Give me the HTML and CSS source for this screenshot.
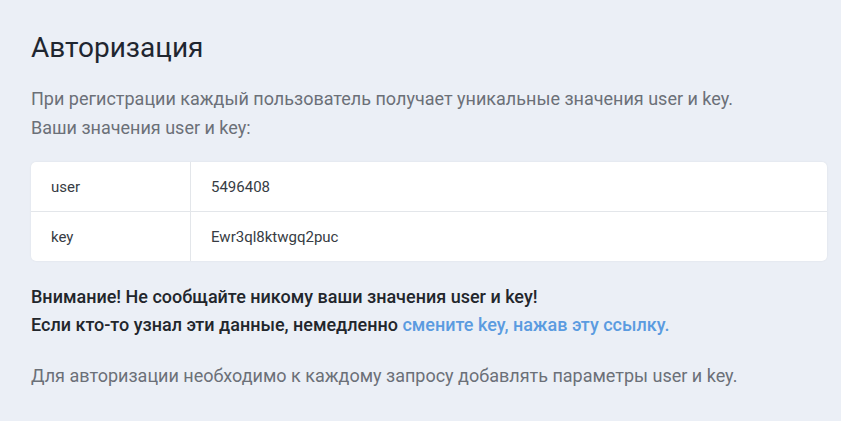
FILE: index.html
```html
<!DOCTYPE html>
<html lang="ru">
<head>
    <meta charset="UTF-8">
    <meta name="viewport" content="width=device-width, initial-scale=1.0">
    <title>Авторизация</title>
    <link rel="stylesheet" href="styles.css">
</head>
<body>
    <div class="page">
        <h1>Авторизация</h1>
        <p class="lead">При регистрации каждый пользователь получает уникальные значения user и key.<br>Ваши значения user и key:</p>

        <table class="creds">
            <tr>
                <td class="name">user</td>
                <td>5496408</td>
            </tr>
            <tr>
                <td class="name">key</td>
                <td>Ewr3ql8ktwgq2puc</td>
            </tr>
        </table>

        <p class="warn">Внимание! Не сообщайте никому ваши значения user и key!<br>Если кто-то узнал эти данные, немедленно <a href="#">смените key, нажав эту ссылку.</a></p>

        <p class="lead">Для авторизации необходимо к каждому запросу добавлять параметры user и key.</p>
    </div>
</body>
</html>
```

FILE: styles.css
```css
body {
    margin: 0;
    background-color: #ebeff6;
    font-family: Roboto, "Noto Sans", sans-serif;
    color: #212529;
}

.page {
    padding: 28px 14px 20px 31px;
}

h1 {
    font-size: 28px;
    font-weight: 400;
    margin: 0 0 16px;
    line-height: 40px;
    color: #1f2630;
}

.lead {
    font-size: 18px;
    line-height: 29px;
    color: #6b7078;
    margin: 0 0 20px;
}

.creds {
    width: 100%;
    border-collapse: collapse;
    background: #fff;
    border-radius: 5px;
    box-shadow: 0 0 2px rgba(0, 0, 0, 0.08);
    font-size: 15px;
    color: #373c44;
    margin-bottom: 22px;
}

.creds td {
    height: 49px;
    padding: 0 20px;
}

.creds tr + tr td {
    border-top: 1px solid #e3e6ea;
}

.creds .name {
    width: 119px;
    border-right: 1px solid #e3e6ea;
}

.warn {
    font-size: 18px;
    font-weight: 500;
    line-height: 28px;
    color: #22262c;
    margin: 0 0 22px;
}

.warn a {
    color: #5a9be0;
    text-decoration: none;
}
```
